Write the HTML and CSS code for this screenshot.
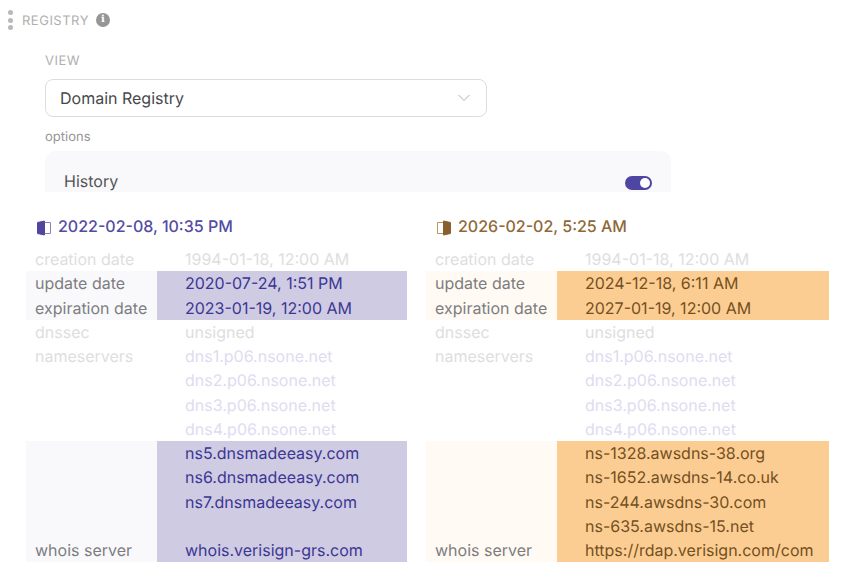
FILE: index.html
```html
<!DOCTYPE html>
<html lang="en">
<head>
<meta charset="utf-8">
<title>Registry</title>
<link rel="stylesheet" href="styles.css">
</head>
<body>
<header class="head">
  <span class="dots"><i></i><i></i><i></i></span>
  <span class="head-title">REGISTRY</span>
  <span class="info">i</span>
</header>
<section class="controls">
  <div class="view-label">VIEW</div>
  <div class="select">
    <span>Domain Registry</span>
    <svg width="14" height="8" viewBox="0 0 14 8"><path d="M1.500 1 7 6.500 12.500 1" fill="none" stroke="#b0b0b4" stroke-width="1"/></svg>
  </div>
  <div class="options-label">options</div>
  <div class="panel">
    <span>History</span>
    <span class="toggle"><i></i></span>
  </div>
</section>
<main class="compare">
  <section class="side old">
    <h2 class="when">
      <svg width="14" height="16" viewBox="0 0 14 16"><path d="M.5 2.500 7.500 1V15L.5 13.500Z" fill="#5046a0" stroke="#5046a0"/><path d="M7.500 2.500H13.500V13.500H7.500" fill="none" stroke="#7a72b8" stroke-width=".9"/></svg>
      2022-02-08, 10:35 PM
    </h2>
    <div class="table">
      <div class="row dim"><span>creation date</span><span>1994-01-18, 12:00 AM</span></div>
      <div class="row hi"><span>update date</span><span>2020-07-24, 1:51 PM</span></div>
      <div class="row hi"><span>expiration date</span><span>2023-01-19, 12:00 AM</span></div>
      <div class="row dim"><span>dnssec</span><span>unsigned</span></div>
      <div class="row dim ns"><span>nameservers</span><span>dns1.p06.nsone.net</span></div>
      <div class="row dim ns"><span></span><span>dns2.p06.nsone.net</span></div>
      <div class="row dim ns"><span></span><span>dns3.p06.nsone.net</span></div>
      <div class="row dim ns"><span></span><span>dns4.p06.nsone.net</span></div>
      <div class="row hi"><span></span><span>ns5.dnsmadeeasy.com</span></div>
      <div class="row hi"><span></span><span>ns6.dnsmadeeasy.com</span></div>
      <div class="row hi"><span></span><span>ns7.dnsmadeeasy.com</span></div>
      <div class="row hi"><span></span><span>&nbsp;</span></div>
      <div class="row hi"><span>whois server</span><span>whois.verisign-grs.com</span></div>
    </div>
  </section>
  <section class="side new">
    <h2 class="when">
      <svg width="14" height="16" viewBox="0 0 14 16"><path d="M7 2.500H.5V13.500H7" fill="none" stroke="#b58a50" stroke-width=".9"/><path d="M6.500 1 13.500 2.500V13.500L6.500 15Z" fill="#8a5f2e" stroke="#8a5f2e"/></svg>
      2026-02-02, 5:25 AM
    </h2>
    <div class="table">
      <div class="row dim"><span>creation date</span><span>1994-01-18, 12:00 AM</span></div>
      <div class="row hi"><span>update date</span><span>2024-12-18, 6:11 AM</span></div>
      <div class="row hi"><span>expiration date</span><span>2027-01-19, 12:00 AM</span></div>
      <div class="row dim"><span>dnssec</span><span>unsigned</span></div>
      <div class="row dim ns"><span>nameservers</span><span>dns1.p06.nsone.net</span></div>
      <div class="row dim ns"><span></span><span>dns2.p06.nsone.net</span></div>
      <div class="row dim ns"><span></span><span>dns3.p06.nsone.net</span></div>
      <div class="row dim ns"><span></span><span>dns4.p06.nsone.net</span></div>
      <div class="row hi"><span></span><span>ns-1328.awsdns-38.org</span></div>
      <div class="row hi"><span></span><span>ns-1652.awsdns-14.co.uk</span></div>
      <div class="row hi"><span></span><span>ns-244.awsdns-30.com</span></div>
      <div class="row hi"><span></span><span>ns-635.awsdns-15.net</span></div>
      <div class="row hi"><span>whois server</span><span>https://rdap.verisign.com/com</span></div>
    </div>
  </section>
</main>
</body>
</html>
```
FILE: styles.css
```css
html, body { margin: 0; padding: 0; background: #fff; }
body {
  width: 844px;
  height: 562px;
  overflow: hidden;
  font-family: Inter, "Liberation Sans", sans-serif;
  text-rendering: geometricPrecision;
  color: #444;
}
.head { display: flex; align-items: center; height: 20px; padding: 10px 0 0 8px; }
.dots { display: flex; flex-direction: column; gap: 2.500px; width: 14px; }
.dots i { width: 5px; height: 5px; border-radius: 50%; background: #b8b8b8; display: block; }
.head-title { font-size: 13px; color: #b0b0b0; letter-spacing: .5px; padding-top: 1px; }
.info {
  margin-left: 7px; width: 14px; height: 14px; border-radius: 50%; background: #969696; color: #fff;
  font: bold 10px/14px "DejaVu Serif", serif; text-align: center;
}
.controls { padding: 21px 0 0 45px; width: 626px; }
.view-label { font-size: 13px; line-height: 20px; color: #b0b0b0; letter-spacing: .5px; }
.select {
  box-sizing: border-box; width: 442px; height: 38px; margin-top: 8px; padding: 0 15px 0 14px;
  border: 1px solid #dcdcdc; border-radius: 8px; display: flex; align-items: center; justify-content: space-between;
  font-size: 16px; color: #48484b;
}
.options-label { font-size: 13px; line-height: 16px; color: #969696; margin-top: 12px; }
.panel {
  height: 41px; margin-top: 6px; padding: 0 19px; background: #f9f9fb; border-radius: 10px 10px 0 0;
  display: flex; justify-content: space-between; align-items: flex-end; font-size: 16px; color: #545456;
}
.panel > span:first-child { line-height: 22px; }
.toggle { width: 27px; height: 14px; border-radius: 7px; background: #4f46a3; position: relative; margin-bottom: 2px; }
.toggle i { position: absolute; right: 2px; top: 2px; width: 10px; height: 10px; border-radius: 50%; background: #fff; }
.compare { display: flex; padding: 0 0 0 26px; }
.side { display: flex; flex-direction: column; }
.side.old { width: 381px; margin-right: 19px; }
.side.new { width: 403px; }
.when {
  margin: 0; height: 55px; box-sizing: border-box; padding: 22px 0 0 11px; display: flex; align-items: flex-start; gap: 7px;
  font-size: 16px; line-height: 24px; font-weight: 500;
}
.when svg { margin-top: 6px; }
.old .when { color: #544ba3; }
.new .when { color: #8f6838; }
.row { display: grid; grid-template-columns: 131px 1fr; height: 24.250px; font-size: 16px; line-height: 24.250px; white-space: nowrap; }
.row span:first-child { padding-left: 9px; }
.row span:last-child { padding-left: 28px; }
.dim span { color: #dedede; }
.ns span:last-child { color: #dedcf0; }
.hi span:first-child { color: #7d7d80; }
.old .hi span:first-child { background: #f9f9fc; }
.new .hi span:first-child { background: #fffaf3; }
.old .hi span:last-child { background: #cecbe3; color: #3d3693; }
.new .hi span:last-child { background: #fccd92; color: #74501f; }
```
